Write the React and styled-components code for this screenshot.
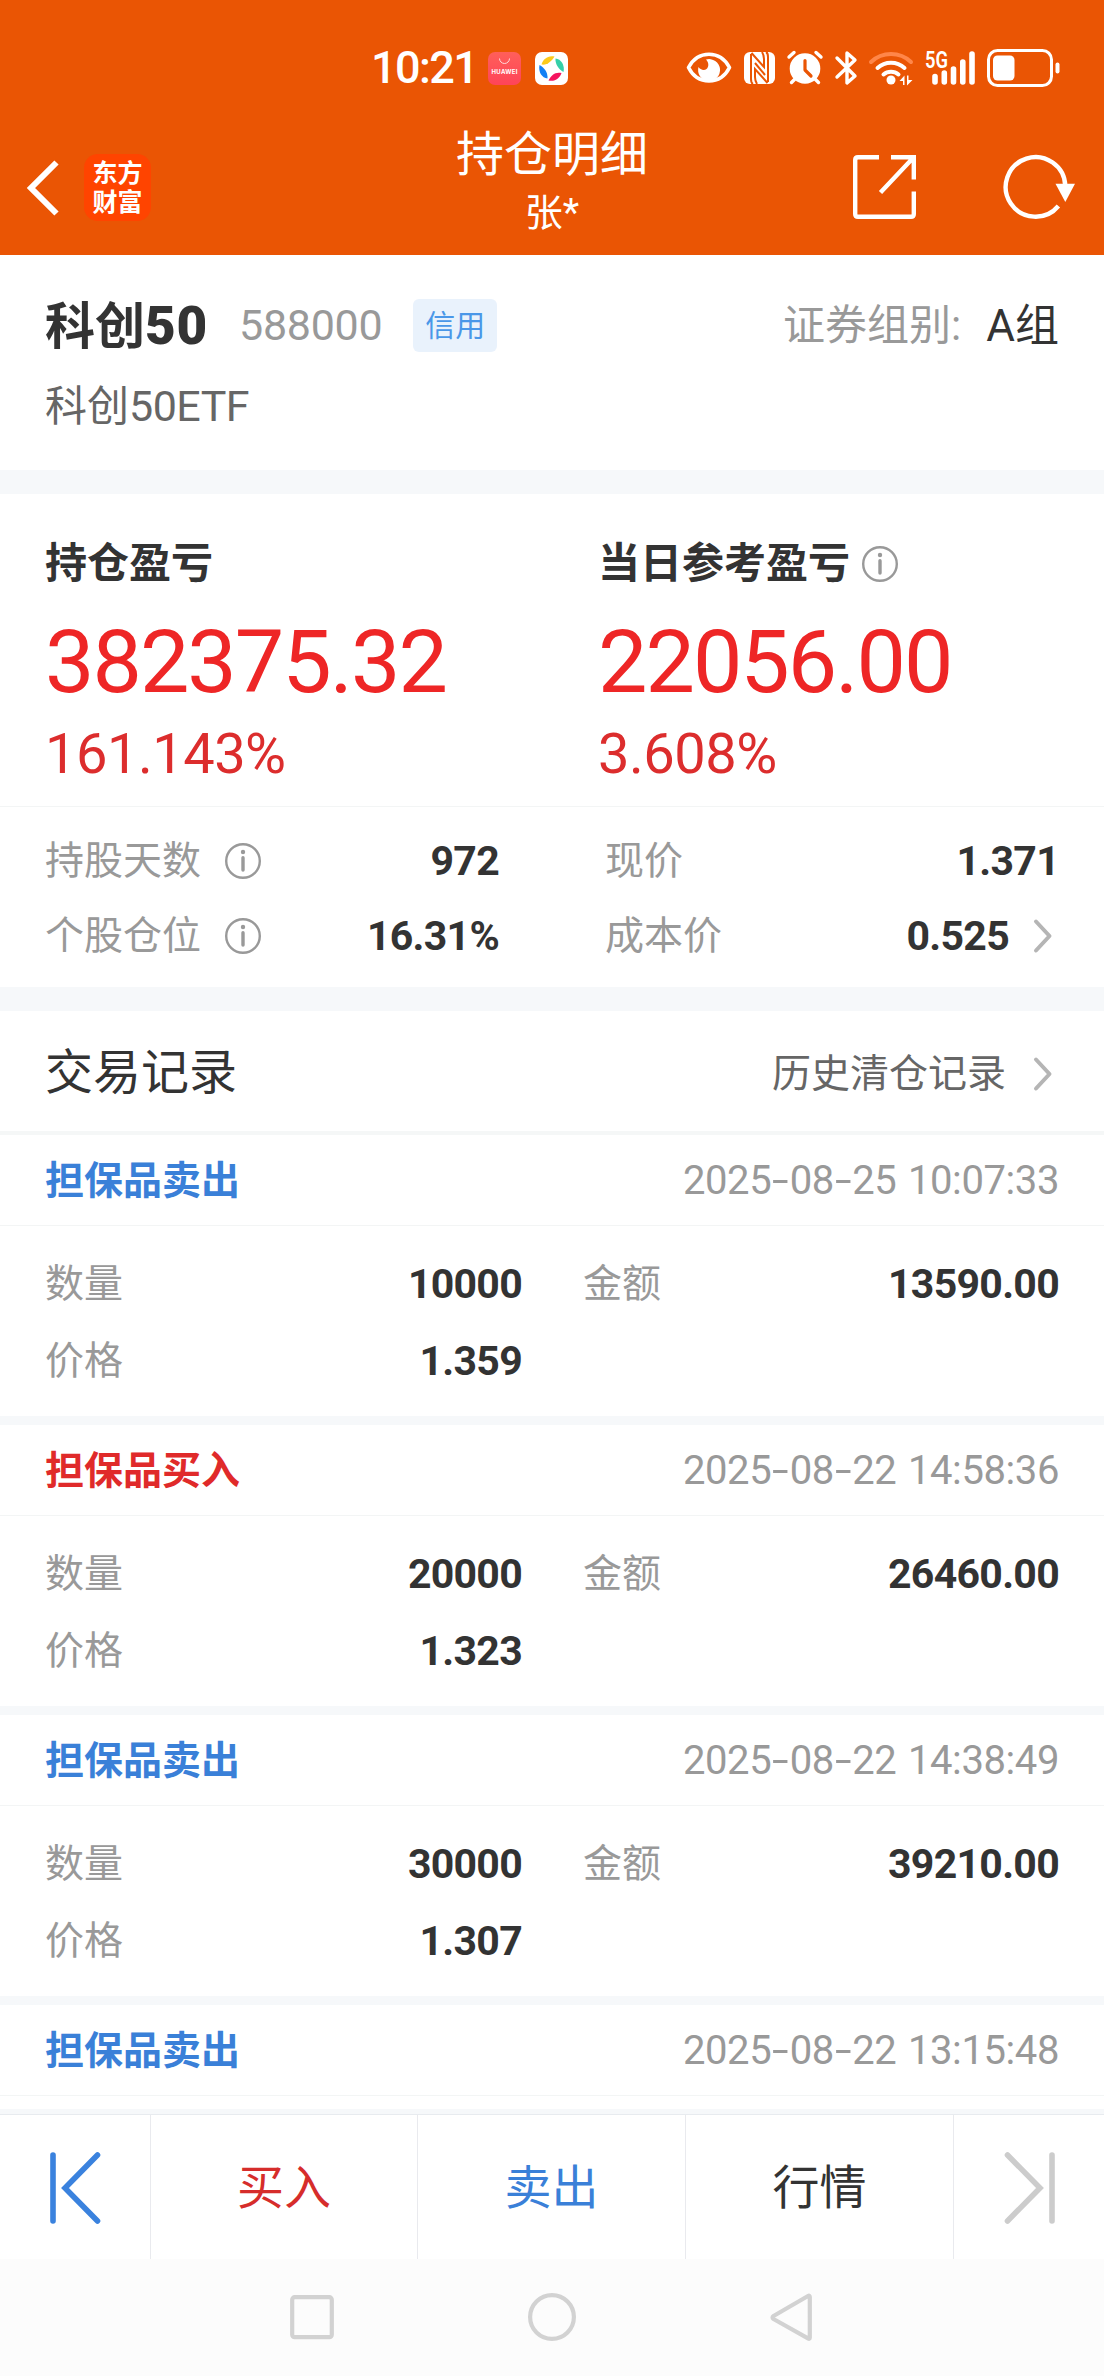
import React from 'react';
import styled, { createGlobalStyle } from 'styled-components';

const records = [
   { id: 1, side: 'sell', title: '担保品卖出', date: '2025-08-25', time: '10:07:33', count: '10000', price: '1.359', amount: '13590.00' },
   { id: 2, side: 'buy', title: '担保品买入', date: '2025-08-22', time: '14:58:36', count: '20000', price: '1.323', amount: '26460.00' },
   { id: 3, side: 'sell', title: '担保品卖出', date: '2025-08-22', time: '14:38:49', count: '30000', price: '1.307', amount: '39210.00' },
   { id: 4, side: 'sell', title: '担保品卖出', date: '2025-08-22', time: '13:15:48' },
];

/*ICONS*/
const HuaweiIcon = () => (
   <svg width="33" height="33" viewBox="0 0 33 33">
      <defs>
         <linearGradient id="hw" x1="0" y1="0" x2="0" y2="1">
            <stop offset="0" stopColor="#ff5f5a" />
            <stop offset="1" stopColor="#ff4458" />
         </linearGradient>
      </defs>
      <rect width="33" height="33" rx="7" fill="url(#hw)" />
      <path d="M11.500 6.500a5 5 0 0 0 10 0" fill="none" stroke="#ffd9d9" strokeWidth="1" />
      <text x="16.500" y="21.500" textAnchor="middle" textLength="26" fontFamily="Inter, sans-serif" fontWeight="700" fontSize="6" fill="#fff">HUAWEI</text>
   </svg>
);
const PinwheelIcon = () => (
   <svg width="33" height="33" viewBox="0 0 33 33">
      <rect width="33" height="33" rx="7" fill="#fff" />
      <path d="M6.500 12.500C8 7 13 3 19.500 4.500C17 9 12 13.500 6.500 12.500Z" fill="#fcca1c" />
      <path d="M20.500 6.500C26 7 30 13 28.500 20C24 17.500 20 12.500 20.500 6.500Z" fill="#35cfa8" />
      <path d="M26.500 21C25 26 20 30 13.500 28.500C16 23.500 20 19.500 26.500 21Z" fill="#f5145f" />
      <path d="M4.500 13C9 15.500 13 20 12.500 26.500C7 26 3 20 4.500 13Z" fill="#1280f5" />
   </svg>
);
const EyeIcon = () => (
   <svg width="46" height="36" viewBox="0 0 46 36">
      <path d="M2.500 17.500C7 9 14.500 4.200 23 4.200S39 9 43.500 17.500C39 26.500 31.500 31 23 31S7 26.500 2.500 17.500Z" fill="none" stroke="#fff" strokeWidth="3.600" strokeLinejoin="round" />
      <path d="M20 9.500A11 11 0 1 1 12.500 17C14 19.500 18 21 20.500 19C23 17 23 12.500 20 9.500Z" fill="#fff" />
   </svg>
);
const NfcIcon = () => (
   <svg width="31" height="36" viewBox="0 0 31 36">
      <rect x="0" y="2" width="31" height="32" rx="6" fill="#fff" />
      <g fill="none" stroke="#ea5504" strokeWidth="2">
         <path d="M7 4V29Q7 33 9 34M7.500 3L20 17V9Q20 5 18 2" />
         <path d="M24 32V7Q24 3 22 2M23.500 33L11 19V27Q11 31 13 34M11 13L21 25" />
      </g>
   </svg>
);
const AlarmIcon = () => (
   <svg width="36" height="36" viewBox="0 0 36 36">
      <circle cx="18" cy="18.500" r="15.300" fill="#fff" />
      <path d="M2 7L7 2.500M29 2.500L34 7M8 29L4.500 32.500M28 29L31.500 32.500" stroke="#fff" strokeWidth="3.400" strokeLinecap="round" />
      <path d="M18 10.500V20L24 26" fill="none" stroke="#ea5504" strokeWidth="3.200" strokeLinecap="round" strokeLinejoin="round" />
   </svg>
);
const BluetoothIcon = () => (
   <svg width="22" height="36" viewBox="0 0 22 36">
      <path d="M2 8L20 26L12 33V3L20 10L2 27" fill="none" stroke="#fff" strokeWidth="3.400" strokeLinecap="round" strokeLinejoin="round" />
   </svg>
);
const WifiIcon = () => (
   <svg width="44" height="36" viewBox="0 0 44 36">
      <g fill="none" strokeWidth="4" strokeLinecap="round">
         <path d="M2 12A29 29 0 0 1 42 12" stroke="#ff8649" />
         <path d="M8.500 18A20 20 0 0 1 35.500 18" stroke="#fff" />
         <path d="M14.500 24.500A11.500 11.500 0 0 1 29.500 24.500" stroke="#fff" />
      </g>
      <circle cx="22" cy="30" r="4.500" fill="#fff" />
      <path d="M30.500 31L35.500 25.500V35H34V31ZM43.500 30L38 35.500V25.500H39.500V30Z" fill="#fff" />
   </svg>
);
const SignalIcon = () => (
   <svg width="50" height="36" viewBox="0 0 50 36">
      <path d="M10 26.500V32M19.300 23V32M28.500 19V32M37.800 12V32M47 4V32" stroke="#fff" strokeWidth="5.600" strokeLinecap="round" />
      <text x="0" y="18" textLength="23" lengthAdjust="spacingAndGlyphs" fontFamily="Roboto, sans-serif" fontWeight="600" fontSize="23" fill="#fff">5G</text>
   </svg>
);
const BatteryIcon = () => (
   <svg width="73" height="38" viewBox="0 0 73 38">
      <rect x="1.500" y="1.500" width="63" height="35" rx="9" fill="none" stroke="#fff" strokeWidth="3" />
      <rect x="6" y="6.500" width="21.500" height="25" rx="4.500" fill="#fff" />
      <rect x="68.500" y="13.500" width="4" height="11" rx="2" fill="#fff" />
   </svg>
);
const BackIcon = () => (
   <svg width="32" height="58" viewBox="0 0 32 58">
      <path d="M29.500 3.500L4 29L29.500 54.500" fill="none" stroke="#fff" strokeWidth="6" strokeLinejoin="miter" />
   </svg>
);
const ExportIcon = () => (
   <svg width="63" height="64" viewBox="0 0 63 64">
      <g fill="none" stroke="#fff" strokeWidth="4.400">
         <path d="M26 2.200H5Q2.200 2.200 2.200 5V59Q2.200 61.800 5 61.800H58Q60.800 61.800 60.800 59V36.500" />
         <path d="M38 2.200H60.800V24.500M60 3L27.500 37.500" />
      </g>
   </svg>
);
const RefreshIcon = () => (
   <svg width="74" height="66" viewBox="-1 -1 74 66">
      <path d="M54.400 51A29.800 29.800 0 1 1 61.300 31" fill="none" stroke="#fff" strokeWidth="4.400" />
      <path d="M51.500 28.700H71L61.300 47Z" fill="#fff" />
   </svg>
);
const InfoIcon = () => (
   <svg width="36" height="36" viewBox="0 0 36 36">
      <circle cx="18" cy="18" r="16.800" fill="none" stroke="#999" strokeWidth="2.400" />
      <circle cx="18" cy="9" r="2.200" fill="#999" />
      <path d="M18 14.800V27" stroke="#999" strokeWidth="3.400" strokeLinecap="round" />
   </svg>
);
const ArrowIcon = () => (
   <svg width="18" height="34" viewBox="0 0 18 34">
      <path d="M2 2.500L15.500 17L2 31.500" fill="none" stroke="#b5b5b5" strokeWidth="4" strokeLinecap="round" strokeLinejoin="round" />
   </svg>
);
const FirstIcon = () => (
   <svg width="51" height="72" viewBox="0 0 51 72">
      <path d="M3 3V69M47.500 3L15 36L47.500 69" fill="none" stroke="currentColor" strokeWidth="5.600" strokeLinecap="round" strokeLinejoin="miter" />
   </svg>
);
const LastIcon = () => (
   <svg width="51" height="72" viewBox="0 0 51 72">
      <path d="M48 3V69M3.500 3L36 36L3.500 69" fill="none" stroke="currentColor" strokeWidth="5.600" strokeLinecap="round" strokeLinejoin="miter" />
   </svg>
);

// dates use a wider dash than the font has
const DateText = ({ value }) => {
   const [year, month, day] = value.split('-');
   return (
      <>
         {year}<Dash>-</Dash>{month}<Dash>-</Dash>{day}
      </>
   );
};

const App = () => {
   return (
      <>
         <GlobalStyle />
         <Page>
            <Top>
               <StatusBar>
                  <StatusLeft>
                     <Clock>10:21</Clock>
                     <HuaweiIcon />
                     <PinwheelIcon />
                  </StatusLeft>
                  <StatusRight>
                     <EyeIcon />
                     <NfcIcon />
                     <AlarmIcon />
                     <BluetoothIcon />
                     <WifiIcon />
                     <SignalIcon />
                     <BatteryIcon />
                  </StatusRight>
               </StatusBar>
               <NavBar>
                  <NavLeft>
                     <BackIcon />
                     <Logo>
                        <span>东方</span>
                        <span>财富</span>
                     </Logo>
                  </NavLeft>
                  <NavCenter>
                     <NavTitle>持仓明细</NavTitle>
                     <NavSub>张*</NavSub>
                  </NavCenter>
                  <NavRight>
                     <ExportIcon />
                     <RefreshIcon />
                  </NavRight>
               </NavBar>
            </Top>

            <Stock>
               <StockRow>
                  <StockName>科创<b>50</b></StockName>
                  <StockCode>588000</StockCode>
                  <Badge>信用</Badge>
                  <GroupLabel>证券组别:</GroupLabel>
                  <GroupValue>A组</GroupValue>
               </StockRow>
               <FullName>科创<span>50ETF</span></FullName>
            </Stock>
            <Band />

            <Profit>
               <ProfitCol $width="553px">
                  <ProfitTitle>持仓盈亏</ProfitTitle>
                  <ProfitValue>382375.32</ProfitValue>
                  <ProfitRate>161.143%</ProfitRate>
               </ProfitCol>
               <ProfitCol>
                  <ProfitTitle>当日参考盈亏<InfoIcon /></ProfitTitle>
                  <ProfitValue>22056.00</ProfitValue>
                  <ProfitRate>3.608%</ProfitRate>
               </ProfitCol>
            </Profit>
            <Facts>
               <Fact>
                  <Label>持股天数</Label>
                  <InfoIcon />
                  <Value>972</Value>
               </Fact>
               <Fact>
                  <Label>现价</Label>
                  <Value>1.371</Value>
               </Fact>
               <Fact>
                  <Label>个股仓位</Label>
                  <InfoIcon />
                  <Value>16.31%</Value>
               </Fact>
               <Fact $arrow>
                  <Label>成本价</Label>
                  <Value>0.525</Value>
                  <ArrowIcon />
               </Fact>
            </Facts>
            <Band />

            <ListHead>
               <ListTitle>交易记录</ListTitle>
               <History>历史清仓记录<ArrowIcon /></History>
            </ListHead>
            <List>
               {records.map((item) => (
                  <Record key={item.id}>
                     <RecordHead>
                        <Side $side={item.side}>{item.title}</Side>
                        <Time><DateText value={item.date} /> {item.time}</Time>
                     </RecordHead>
                     {item.count && (
                        <RecordBody>
                           <Fact>
                              <Label>数量</Label>
                              <Value>{item.count}</Value>
                           </Fact>
                           <Fact>
                              <Label>金额</Label>
                              <Value>{item.amount}</Value>
                           </Fact>
                           <Fact>
                              <Label>价格</Label>
                              <Value>{item.price}</Value>
                           </Fact>
                        </RecordBody>
                     )}
                  </Record>
               ))}
            </List>

            <Toolbar>
               <ToolButton $color="#3a82de"><FirstIcon /></ToolButton>
               <ToolButton $color="#d62d2b">买入</ToolButton>
               <ToolButton $color="#3a80d8">卖出</ToolButton>
               <ToolButton $color="#333">行情</ToolButton>
               <ToolButton $color="#ccc"><LastIcon /></ToolButton>
            </Toolbar>
            <SystemNav>
               <svg width="44" height="48" viewBox="0 0 44 48">
                  <rect x="2.200" y="4.200" width="39.600" height="40" rx="2.500" fill="none" stroke="#d2d2d2" strokeWidth="4.200" />
               </svg>
               <svg width="48" height="48" viewBox="0 0 48 48">
                  <circle cx="24" cy="24" r="21.900" fill="none" stroke="#d2d2d2" strokeWidth="4.200" />
               </svg>
               <svg width="42" height="48" viewBox="0 0 42 48">
                  <path d="M39.800 4V44.500Q39.800 46.500 38 45.400L3.500 26Q1.500 24.500 3.500 23L38 3Q39.800 2 39.800 4Z" fill="none" stroke="#d2d2d2" strokeWidth="4.200" strokeLinejoin="round" />
               </svg>
            </SystemNav>
         </Page>
      </>
   );
};

const GlobalStyle = createGlobalStyle`
   * {
      box-sizing: border-box;
   }
   body {
      margin: 0;
      background: #fff;
      font-family: Roboto, "Noto Sans CJK SC", sans-serif;
      line-height: 1.2;
      color: #333;
   }
   svg {
      display: block;
      flex: none;
      overflow: visible;
   }
`;
const Page = styled.div`
   display: flex;
   flex-direction: column;
   width: 1104px;
   height: 2376px;
   overflow: hidden;
   white-space: nowrap;
`;
const Top = styled.header`
   flex: none;
   height: 255px;
   background: #ea5504;
   color: #fff;
`;
const StatusBar = styled.div`
   display: flex;
   align-items: center;
   justify-content: space-between;
   height: 100px;
   padding: 36px 44px 0 371px;
`;
const StatusLeft = styled.div`
   display: flex;
   align-items: center;
   gap: 14px;
`;
const StatusRight = styled.div`
   display: flex;
   align-items: center;
   gap: 12px;
`;
const Clock = styled.div`
   width: 103px;
   font-size: 45px;
   line-height: 50px;
   font-weight: 500;
   letter-spacing: -1.6px;
`;
const NavBar = styled.div`
   display: grid;
   grid-template-columns: 1fr auto 1fr;
   height: 155px;
`;
const NavLeft = styled.div`
   display: flex;
   align-items: center;
   gap: 25px;
   padding: 20px 0 0 27px;
`;
const Logo = styled.div`
   display: flex;
   flex-direction: column;
   align-items: center;
   justify-content: center;
   width: 67px;
   height: 67px;
   border-radius: 14px;
   background: #ff4400;
   font-size: 25px;
   line-height: 29px;
   font-weight: 700;
`;
const NavCenter = styled.div`
   padding-top: 27px;
   text-align: center;
`;
const NavTitle = styled.div`
   font-size: 48px;
   line-height: 56px;
`;
const NavSub = styled.div`
   margin-top: 8px;
   font-size: 38px;
   line-height: 44px;
`;
const NavRight = styled.div`
   display: flex;
   align-items: center;
   justify-content: flex-end;
   gap: 87px;
   padding: 19px 27px 0 0;
`;
const Stock = styled.section`
   flex: none;
   height: 215px;
   padding: 43px 45px 0;
`;
const StockRow = styled.div`
   display: flex;
   align-items: center;
   height: 54px;
`;
const StockName = styled.div`
   padding-top: 4px;
   font-size: 50px;
   font-weight: 700;
   b {
      font-size: 53px;
      letter-spacing: 0.8px;
   }
`;
const StockCode = styled.div`
   padding-top: 2px;
   margin-left: 31px;
   font-size: 43px;
   letter-spacing: -0.3px;
   color: #999;
`;
const Badge = styled.div`
   width: 84px;
   height: 53px;
   margin-left: 31px;
   border-radius: 6px;
   background: #e9f2fc;
   color: #4a97e8;
   font-size: 30px;
   line-height: 54px;
   text-align: center;
`;
const GroupLabel = styled.div`
   padding-top: 3px;
   margin-left: auto;
   font-size: 42px;
   color: #999;
`;
const GroupValue = styled.div`
   padding-top: 3px;
   margin-left: 25px;
   font-size: 44px;
`;
const FullName = styled.div`
   margin-top: 29px;
   font-size: 42px;
   line-height: 50px;
   color: #666;
   span {
      font-size: 43px;
      letter-spacing: -0.5px;
   }
`;
const Band = styled.div`
   flex: none;
   height: 24px;
   background: #f6f8fa;
`;
const Profit = styled.section`
   display: flex;
   flex: none;
   height: 313px;
   padding: 44px 45px 0;
   border-bottom: 1px solid #f3f5f5;
`;
const ProfitCol = styled.div`
   width: ${(props) => props.$width || 'auto'};
`;
const ProfitTitle = styled.div`
   display: flex;
   align-items: center;
   gap: 12px;
   font-size: 42px;
   line-height: 52px;
   font-weight: 700;
`;
const ProfitValue = styled.div`
   margin-top: 20px;
   font-size: 88px;
   line-height: 104px;
   letter-spacing: -2px;
   color: #ee2626;
`;
const ProfitRate = styled.div`
   margin-top: 7px;
   font-size: 56px;
   line-height: 66px;
   letter-spacing: -0.5px;
   color: #dc2d2d;
`;
const Facts = styled.section`
   display: grid;
   flex: none;
   grid-template-columns: 454px 454px;
   grid-auto-rows: 75px;
   column-gap: 106px;
   height: 180px;
   padding: 16px 45px 0;
`;
const Fact = styled.div`
   display: flex;
   align-items: center;
   gap: ${(props) => (props.$arrow ? '25px' : '24px')};
   padding-right: ${(props) => (props.$arrow ? '7px' : '0')};
`;
const Label = styled.div`
   font-size: 39px;
   line-height: 46px;
   color: #999;
`;
const Value = styled.div`
   margin-left: auto;
   font-size: 41px;
   line-height: 48px;
   font-weight: 700;
   letter-spacing: -0.7px;
`;
const ListHead = styled.div`
   display: flex;
   flex: none;
   align-items: center;
   justify-content: space-between;
   height: 124px;
   padding: 0 52px 0 45px;
   border-bottom: 4px solid #f5f7f7;
`;
const ListTitle = styled.div`
   padding-top: 3px;
   font-size: 48px;
`;
const History = styled.div`
   display: flex;
   align-items: center;
   gap: 28px;
   padding-top: 7px;
   font-size: 39px;
   color: #666;
`;
const List = styled.div`
   flex: none;
   height: 979px;
   overflow: hidden;
   border-bottom: 5px solid #f6f8fa;
`;
const Record = styled.div`
   border-bottom: 9px solid #f6f8fa;
   &:last-child {
      border-bottom: none;
   }
`;
const RecordHead = styled.div`
   display: flex;
   align-items: center;
   justify-content: space-between;
   height: 91px;
   padding: 0 45px;
   border-bottom: 1px solid #f3f5f5;
`;
const Side = styled.div`
   padding-top: 3px;
   font-size: 39px;
   font-weight: 700;
   color: ${(props) => (props.$side === 'buy' ? '#e02a2a' : '#3a80d8')};
`;
const Time = styled.div`
   padding-top: 2px;
   font-size: 40px;
   letter-spacing: -0.4px;
   word-spacing: 2px;
   color: #999;
`;
const Dash = styled.span`
   display: inline-block;
   width: 18.400px;
   text-align: center;
   letter-spacing: 0;
   transform: scaleX(1.5);
`;
const RecordBody = styled.div`
   display: grid;
   grid-template-columns: 477px 476px;
   grid-auto-rows: 77px;
   column-gap: 61px;
   height: 190px;
   padding: 19px 45px 0;
`;
const Toolbar = styled.div`
   display: grid;
   flex: none;
   grid-template-columns: 151px 267px 268px 268px 150px;
   height: 145px;
   border-top: 1px solid #e8ebef;
`;
const ToolButton = styled.div`
   display: flex;
   align-items: center;
   justify-content: center;
   padding-top: 2px;
   border-right: 1px solid #e9eaee;
   font-size: 47px;
   color: ${(props) => props.$color};
   &:last-child {
      border-right: none;
   }
`;
const SystemNav = styled.div`
   display: flex;
   flex: 1;
   align-items: flex-start;
   gap: 194px;
   padding: 34px 0 0 290px;
   background: #fcfcfc;
`;

export default App;
